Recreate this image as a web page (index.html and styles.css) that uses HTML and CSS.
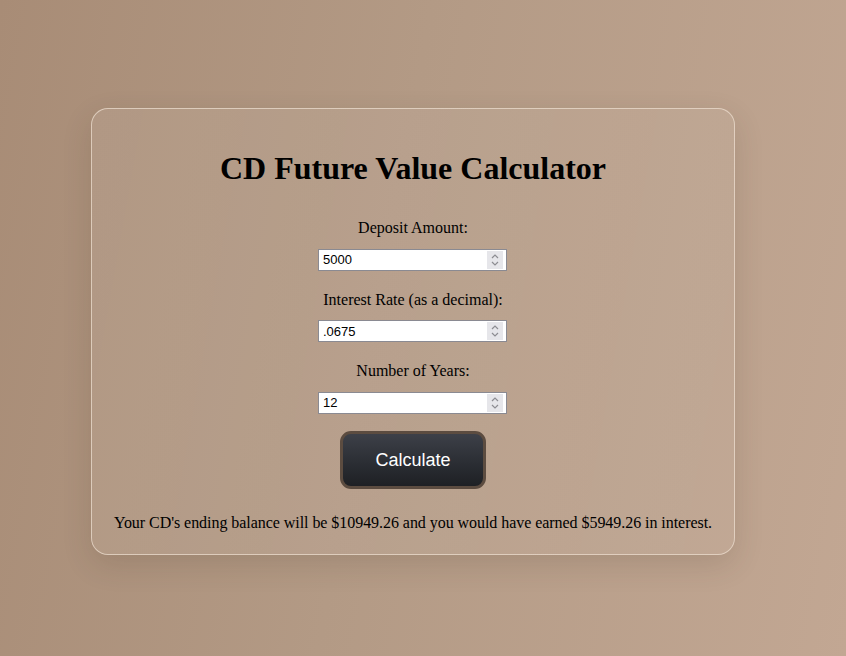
FILE: index.html
```html
<!DOCTYPE html>
<html lang="en">
<head>
<meta charset="utf-8">
<title>CD Future Value Calculator</title>
<link rel="stylesheet" href="styles.css">
</head>
<body>
<main class="card">
  <h1 class="title">CD Future Value Calculator</h1>
  <form class="form">
    <label class="label" for="deposit">Deposit Amount:</label>
    <span class="field">
      <input class="input" id="deposit" type="number" value="5000">
      <span class="spin"><svg width="10" height="14" viewBox="0 0 10 14"><path d="M2 5 L5 2 L8 5 M2 9 L5 12 L8 9" fill="none" stroke="#8d8d92" stroke-width="1.2"/></svg></span>
    </span>
    <label class="label" for="rate">Interest Rate (as a decimal):</label>
    <span class="field">
      <input class="input" id="rate" type="number" value=".0675">
      <span class="spin"><svg width="10" height="14" viewBox="0 0 10 14"><path d="M2 5 L5 2 L8 5 M2 9 L5 12 L8 9" fill="none" stroke="#8d8d92" stroke-width="1.2"/></svg></span>
    </span>
    <label class="label" for="years">Number of Years:</label>
    <span class="field field-last">
      <input class="input" id="years" type="number" value="12">
      <span class="spin"><svg width="10" height="14" viewBox="0 0 10 14"><path d="M2 5 L5 2 L8 5 M2 9 L5 12 L8 9" fill="none" stroke="#8d8d92" stroke-width="1.2"/></svg></span>
    </span>
    <button class="button" type="button">Calculate</button>
  </form>
  <p class="result">Your CD's ending balance will be $10949.26 and you would have earned $5949.26 in interest.</p>
</main>
</body>
</html>
```
FILE: styles.css
```css
html, body {
  margin: 0;
  height: 100%;
}
body {
  background: linear-gradient(100deg, #a88c76 0%, #b39a85 45%, #c2a793 100%);
  font-family: "Liberation Serif", "Times New Roman", serif;
  color: #000;
  padding: 108px 0 0 91px;
  box-sizing: border-box;
  overflow: hidden;
}
.card {
  width: 644px;
  box-sizing: border-box;
  padding: 20px 20px;
  border: 1px solid rgba(235, 220, 205, 0.75);
  border-radius: 17px;
  background: linear-gradient(100deg, rgba(255,255,255,0.08), rgba(255,255,255,0.05));
  box-shadow: 0 10px 30px rgba(60, 40, 25, 0.14);
  text-align: center;
}
.title {
  font-size: 32px;
  font-weight: bold;
  line-height: 37px;
  margin: 21px 0 31px;
}
.form {
  display: flex;
  flex-direction: column;
  align-items: center;
}
.label {
  display: block;
  font-size: 16px;
  line-height: 18.5px;
  margin-bottom: 11px;
  padding-top: 1px;
}
.field {
  position: relative;
  display: block;
  width: 189px;
  height: 22px;
  margin: 0 1px 19px 0;
}
.field-last {
  margin-bottom: 17px;
}
.input {
  width: 100%;
  height: 100%;
  box-sizing: border-box;
  margin: 0;
  border: 1px solid #8a8a92;
  border-radius: 0;
  padding: 0 4px;
  background: #fff;
  font-family: "Liberation Sans", Arial, sans-serif;
  font-size: 13px;
  color: #000;
  -moz-appearance: textfield;
  appearance: textfield;
  outline: none;
}
.input::-webkit-inner-spin-button,
.input::-webkit-outer-spin-button {
  -webkit-appearance: none;
  margin: 0;
}
.spin {
  position: absolute;
  right: 4px;
  top: 2px;
  width: 16px;
  height: 18px;
  background: #e6e6ea;
  display: flex;
  align-items: center;
  justify-content: center;
}
.button {
  height: 58px;
  padding: 2px 32px 0;
  border: 3px solid #5c4c40;
  border-radius: 11px;
  background: linear-gradient(180deg, #3d4048 0%, #2b2e34 55%, #1e2024 100%);
  color: #fff;
  font-family: "Liberation Sans", Arial, sans-serif;
  font-size: 18px;
  cursor: pointer;
}
.result {
  font-size: 16px;
  line-height: 18px;
  margin: 25px -12px 2px;
  white-space: nowrap;
  letter-spacing: -0.05px;
}
```
